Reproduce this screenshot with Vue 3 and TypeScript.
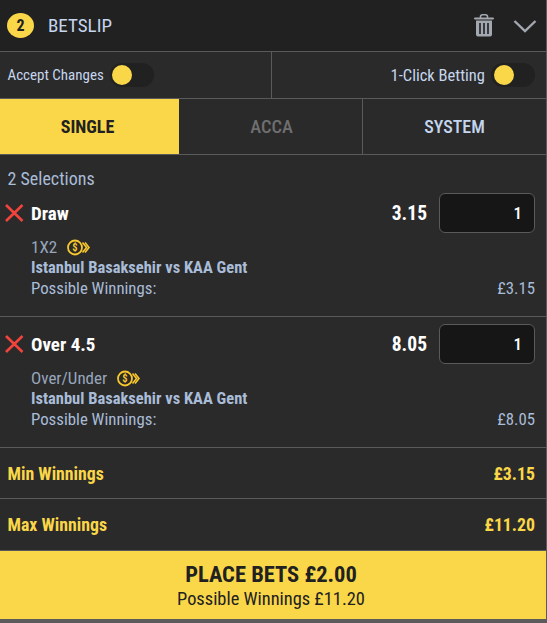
<script setup lang="ts">
interface Selection {
  name: string
  odds: string
  market: string
  match: string
  winnings: string
}

const selections: Selection[] = [
  { name: 'Draw', odds: '3.15', market: '1X2', match: 'Istanbul Basaksehir vs KAA Gent', winnings: '£3.15' },
  { name: 'Over 4.5', odds: '8.05', market: 'Over/Under', match: 'Istanbul Basaksehir vs KAA Gent', winnings: '£8.05' },
]
</script>

<template>
  <div class="betslip">
    <header class="head">
      <span class="count">2</span>
      <span class="title">BETSLIP</span>
      <svg class="trash" width="20" height="23" viewBox="0 0 20 23">
        <path d="M6.5 4 V2.6 A1.8 1.8 0 0 1 8.3 0.8 H11.7 A1.8 1.8 0 0 1 13.5 2.6 V4" fill="none" stroke="#a3a8b0" stroke-width="1.6" />
        <rect x="0" y="3.4" width="20" height="2.2" rx="1" fill="#a3a8b0" />
        <path d="M2 6.5 H18 V20.5 A2 2 0 0 1 16 22.5 H4 A2 2 0 0 1 2 20.5 Z" fill="#a3a8b0" />
        <path d="M6 9 V20 M10 9 V20 M14 9 V20" stroke="#26272a" stroke-width="1.7" />
      </svg>
      <svg class="chevron" width="24" height="14" viewBox="0 0 24 14">
        <path d="M1.5 2 L12 12 L22.5 2" fill="none" stroke="#a3a8b0" stroke-width="2.4" />
      </svg>
    </header>

    <div class="options">
      <div class="option">
        <span>Accept Changes</span>
        <span class="toggle"><i></i></span>
      </div>
      <div class="option right">
        <span>1-Click Betting</span>
        <span class="toggle"><i></i></span>
      </div>
    </div>

    <nav class="tabs">
      <div class="tab active">SINGLE</div>
      <div class="tab muted">ACCA</div>
      <div class="tab">SYSTEM</div>
    </nav>

    <div class="summary">2 Selections</div>

    <section v-for="(s, i) in selections" :key="s.name" class="sel" :class="{ first: i === 0 }">
      <div class="sel-top">
        <svg class="remove" width="20" height="18" viewBox="0 0 20 18">
          <path d="M2 1 L18.5 17 M18.5 1 L2 17" stroke="#f2443c" stroke-width="2.6" fill="none" />
        </svg>
        <span class="sel-name">{{ s.name }}</span>
        <span class="odds">{{ s.odds }}</span>
        <div class="stake">1</div>
      </div>
      <div class="sel-info">
        <div class="market">
          {{ s.market }}
          <svg class="boost" width="24" height="17" viewBox="0 0 24 17">
            <circle cx="8" cy="8.5" r="7" fill="none" stroke="#f7c72c" stroke-width="1.8" />
            <path d="M15.5 3.5 L19.5 8.5 L15.5 13.5 M18 3.5 L22 8.5 L18 13.5" fill="none" stroke="#f7c72c" stroke-width="1.6" />
            <text x="8" y="12.3" text-anchor="middle" class="dollar">$</text>
          </svg>
        </div>
        <div class="match">{{ s.match }}</div>
        <div class="poss">
          <span>Possible Winnings:</span>
          <span>{{ s.winnings }}</span>
        </div>
      </div>
    </section>

    <div class="total">
      <span>Min Winnings</span>
      <span>£3.15</span>
    </div>
    <div class="total last">
      <span>Max Winnings</span>
      <span>£11.20</span>
    </div>

    <button class="place">
      <span class="place-main">PLACE BETS £2.00</span>
      <span class="place-sub">Possible Winnings £11.20</span>
    </button>
  </div>
</template>

<style>
html,
body {
  margin: 0;
  background: #5b5b5b;
}
</style>

<style scoped>
.betslip {
  width: 546px;
  height: 619px;
  background: #2a2a2a;
  color: #a9bcd8;
  font-family: Roboto, "Liberation Sans", sans-serif;
  font-stretch: condensed;
  font-size: 17px;
  overflow: hidden;
}
.head {
  height: 51px;
  display: flex;
  align-items: center;
  background: #212121;
  border-bottom: 1px solid #5a5a5a;
  padding: 0 9px 0 7px;
}
.count {
  width: 27px;
  height: 25px;
  border-radius: 50%;
  background: #fad748;
  color: #212121;
  font-size: 16px;
  font-weight: 700;
  display: flex;
  align-items: center;
  justify-content: center;
}
.title {
  margin-left: 14px;
  font-size: 19px;
  color: #c6d6ee;
  flex: 1;
}
.trash {
  margin-right: 19px;
}
.options {
  height: 46px;
  display: flex;
  border-bottom: 1px solid #5a5a5a;
}
.option {
  flex: 0 0 272px;
  display: flex;
  align-items: center;
  gap: 6px;
  padding-left: 7.5px;
  box-sizing: border-box;
  font-size: 15px;
  color: #c6d6ee;
  border-right: 1px solid #5a5a5a;
}
.option.right {
  flex: 1;
  border-right: 0;
  justify-content: flex-end;
  padding: 0 11px 0 0;
  font-size: 16.5px;
}
.toggle {
  width: 44px;
  height: 24px;
  border-radius: 12px;
  background: #212121;
  display: block;
  position: relative;
}
.toggle i {
  position: absolute;
  left: 2px;
  top: 2px;
  width: 20px;
  height: 20px;
  border-radius: 50%;
  background: #fad748;
}
.right .toggle i {
  left: 3px;
}
.tabs {
  height: 55px;
  display: flex;
  border-bottom: 1px solid #5a5a5a;
}
.tab {
  flex: 1;
  display: flex;
  align-items: center;
  justify-content: center;
  font-size: 18px;
  font-weight: 500;
  color: #c6d6ee;
  border-left: 1px solid #5a5a5a;
}
.tab.active {
  flex: 0 0 179px;
  box-sizing: border-box;
  padding-right: 4px;
  background: #fad748;
  color: #212121;
  font-weight: 700;
  border-left: 0;
}
.tab.muted {
  flex: 0 0 183px;
  box-sizing: border-box;
  padding-left: 2px;
  color: #6f6f6f;
  border-left: 0;
  font-size: 18.5px;
}
.summary {
  height: 38px;
  padding-top: 13px;
  padding-left: 7.5px;
  box-sizing: border-box;
  font-size: 18px;
}
.sel {
  border-bottom: 1px solid #5a5a5a;
  height: 131px;
  padding-top: 7px;
  box-sizing: border-box;
}
.sel.first {
  height: 124px;
  padding-top: 0;
}
.sel-top {
  display: flex;
  align-items: center;
  height: 40px;
  padding: 0 11px 0 4px;
}
.remove {
  flex: none;
}
.sel-name {
  margin-left: 7px;
  flex: 1;
  color: #fff;
  font-size: 19px;
  font-weight: 700;
}
.odds {
  color: #fff;
  font-size: 19.5px;
  font-weight: 700;
  margin-right: 12px;
}
.stake {
  width: 96px;
  height: 40px;
  box-sizing: border-box;
  background: #161616;
  border: 1px solid #5a5a5a;
  border-radius: 6px;
  color: #fff;
  font-size: 17px;
  font-weight: 500;
  display: flex;
  align-items: center;
  justify-content: flex-end;
  padding-right: 12px;
}
.sel-info {
  padding: 4px 11px 0 31px;
  line-height: 21px;
}
.market {
  display: flex;
  align-items: center;
  gap: 10px;
  height: 20px;
  color: #98a6bc;
}
.boost {
  flex: none;
}
.dollar {
  font-size: 10.5px;
  font-weight: 700;
  fill: #f7c72c;
}
.match {
  font-weight: 700;
  font-size: 16.5px;
}
.poss {
  display: flex;
  justify-content: space-between;
  font-size: 16.8px;
}
.total {
  height: 51px;
  box-sizing: border-box;
  display: flex;
  align-items: center;
  justify-content: space-between;
  padding: 0 11px 0 7.5px;
  border-bottom: 1px solid #5a5a5a;
  color: #fad748;
  font-size: 17.8px;
  font-weight: 700;
}
.total.last {
  height: 52px;
}
.place {
  width: 100%;
  height: 68px;
  border: 0;
  margin: 0;
  padding: 0 4px 0 0;
  background: #fad748;
  color: #212121;
  font-family: inherit;
  font-stretch: condensed;
  display: flex;
  flex-direction: column;
  align-items: center;
  justify-content: center;
}
.place-main {
  font-size: 22.5px;
  font-weight: 700;
  line-height: 27px;
}
.place-sub {
  font-size: 18.4px;
  line-height: 21px;
}
</style>
